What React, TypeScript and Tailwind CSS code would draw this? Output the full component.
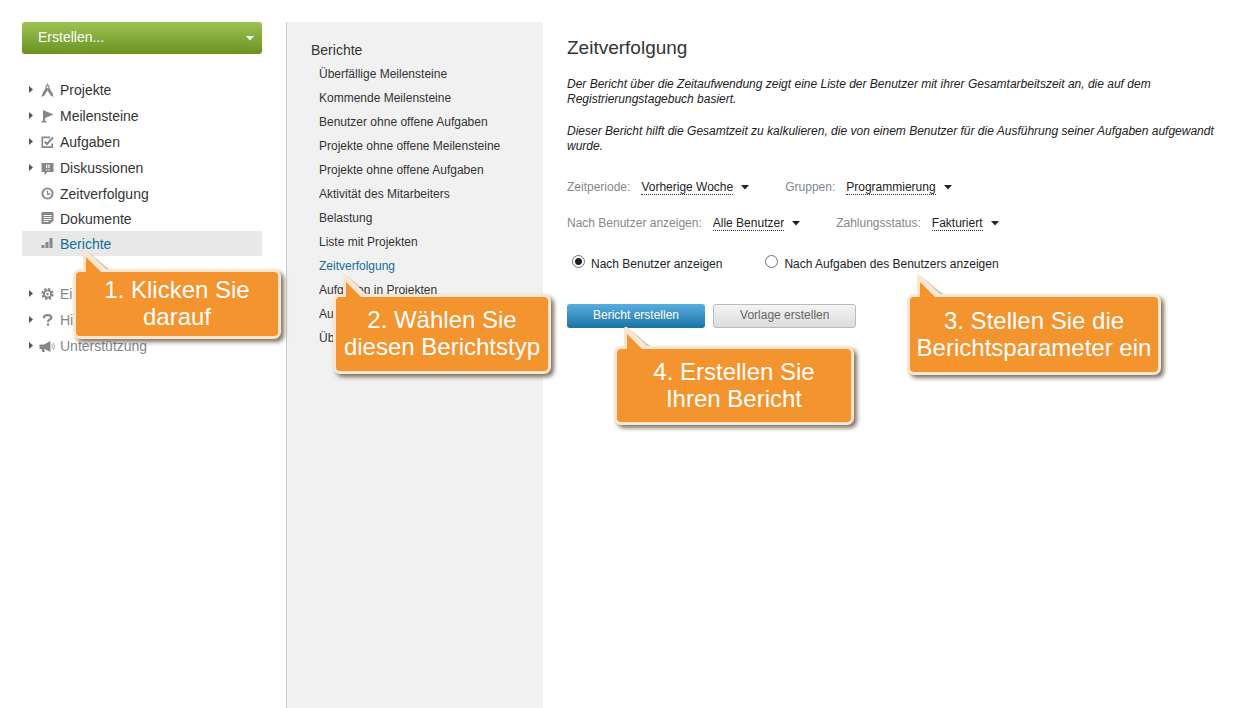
import React, { useState } from 'react';
import clsx from 'clsx';

interface NavItem {
  label: string;
  icon: React.ReactNode;
  expandable?: boolean;
}

const MAIN_ITEMS: NavItem[] = [
  {
    label: 'Projekte',
    expandable: true,
    icon: (
      <>
        <path d="M6 -0.5h1v2h-1z" />
        <circle cx="6.5" cy="3" r="1.6" fill="none" stroke="currentColor" strokeWidth="1.2" />
        <path d="M4.6 4 L1.4 9.6 L0.6 13 L3.4 11.6 L6.5 6.6 L9.6 11.6 L12.4 13 L11.6 9.6 L8.4 4 L6.5 5.4 Z" />
      </>
    ),
  },
  {
    label: 'Meilensteine',
    expandable: true,
    icon: <path d="M2 0 L12.5 4.6 L4.2 8 V11 H5.5 V12.5 H0.5 V11 H2 Z" />,
  },
  {
    label: 'Aufgaben',
    expandable: true,
    icon: (
      <>
        <path d="M9 1.3 H1.3 V11.2 H11.2 V7.5" fill="none" stroke="currentColor" strokeWidth="1.7" />
        <path d="M3.6 5.6 L6 8 L12 1.4" fill="none" stroke="currentColor" strokeWidth="2" />
      </>
    ),
  },
  {
    label: 'Diskussionen',
    expandable: true,
    icon: (
      <>
        <path d="M0.5 1 H12.5 V10 H6.5 L3.5 13 V10 H0.5 Z" />
        <path d="M5 2.5h1.2v3.5h-1.2z M7.3 2.5h1.2v3.5h-1.2z M5 7.2h1.2v1.3h-1.2z M7.3 7.2h1.2v1.3h-1.2z" fill="#fff" />
      </>
    ),
  },
  {
    label: 'Zeitverfolgung',
    icon: (
      <>
        <circle cx="6.5" cy="6.5" r="5.1" fill="none" stroke="currentColor" strokeWidth="1.9" />
        <path d="M6.5 3.4 V7 H9.4" fill="none" stroke="currentColor" strokeWidth="1.3" />
      </>
    ),
  },
  {
    label: 'Dokumente',
    icon: (
      <>
        <path d="M1.5 0 H11.5 Q12.5 0 12.5 1 V8.5 L9 12 H1.5 Q0.5 12 0.5 11 V1 Q0.5 0 1.5 0 Z" />
        <path d="M2.5 3h8v1h-8z M2.5 5h8v1h-8z M2.5 7h8v1h-8z M2.5 9h5v1h-5z" fill="#fff" />
      </>
    ),
  },
  {
    label: 'Berichte',
    icon: <path d="M0.5 8h3v3h-3z M4.5 5h3v6h-3z M8.5 1h3v10h-3z" />,
  },
];

const EXTRA_ITEMS: NavItem[] = [
  {
    label: 'Ei',
    expandable: true,
    icon: (
      <>
        <circle cx="6.5" cy="6" r="5.2" fill="none" stroke="currentColor" strokeWidth="1.8" strokeDasharray="2.4 1.68" />
        <circle cx="6.5" cy="6" r="3.6" fill="none" stroke="currentColor" strokeWidth="1.9" />
        <circle cx="6.5" cy="6" r="1.2" />
      </>
    ),
  },
  {
    label: 'Hi',
    expandable: true,
    icon: (
      <>
        <path d="M3 4.2 V3.2 Q3.2 1.2 6.6 1.2 Q10.4 1.2 10.4 3.6 Q10.4 5 8.4 5.8 Q7 6.4 7 8" fill="none" stroke="currentColor" strokeWidth="2.2" />
        <path d="M5.9 9.3h2.3v2.2h-2.3z" />
      </>
    ),
  },
  {
    label: 'Unterstützung',
    expandable: true,
    icon: (
      <>
        <path d="M-1.5 4.5 H3 L9.4 1 V12 L3.4 9 H3 L4 12 H1.4 L0.4 9 H-1.5 Z" />
        <path d="M10.8 4.2 Q12 6.5 10.8 8.8 M12.4 2.8 Q14.4 6.5 12.4 10.2" fill="none" stroke="currentColor" strokeWidth="0.7" />
      </>
    ),
  },
];

const REPORTS = [
  'Überfällige Meilensteine',
  'Kommende Meilensteine',
  'Benutzer ohne offene Aufgaben',
  'Projekte ohne offene Meilensteine',
  'Projekte ohne offene Aufgaben',
  'Aktivität des Mitarbeiters',
  'Belastung',
  'Liste mit Projekten',
  'Zeitverfolgung',
  'Aufgaben in Projekten',
  'Au',
  'Üb',
];

const FILTER_ROWS = [
  [
    { id: 'period', label: 'Zeitperiode:', value: 'Vorherige Woche' },
    { id: 'group', label: 'Gruppen:', value: 'Programmierung' },
  ],
  [
    { id: 'user', label: 'Nach Benutzer anzeigen:', value: 'Alle Benutzer' },
    { id: 'payment', label: 'Zahlungsstatus:', value: 'Fakturiert' },
  ],
];

const NavList = ({ items, active, muted }: { items: NavItem[]; active?: string; muted?: boolean }) => (
  <ul>
    {items.map((item) => (
      <li key={item.label}>
        <a
          href="#"
          className={clsx(
            'flex items-center pl-[7px] text-sm',
            item.expandable ? 'h-[26px]' : 'h-[25px]',
            item.label === active && 'bg-[#e8e8e8] text-[#116d9d]',
            item.label !== active && (muted ? 'text-[#83888d]' : 'text-[#333]')
          )}
        >
          <svg width="5" height="8" viewBox="0 0 5 8" className="mr-[7px] shrink-0 text-[#555]" fill="currentColor">
            {item.expandable && <path d="M0 0 L4 3.5 L0 7 Z" />}
          </svg>
          <svg
            width="13"
            height="13"
            viewBox="0 0 13 13"
            className="mr-[6px] shrink-0 overflow-visible text-[#83888d]"
            fill="currentColor"
          >
            {item.icon}
          </svg>
          {item.label}
        </a>
      </li>
    ))}
  </ul>
);

const Callout = ({ className, children }: { className: string; children: React.ReactNode }) => (
  <div className={clsx('absolute z-10', className)}>
    <div className="flex h-full items-center justify-center rounded-[7px] border-[3px] border-[#fde6cf] bg-[#f4942e] pb-[2px] text-center text-2xl leading-[27px] text-white shadow-[3px_3px_4px_rgba(60,40,20,0.65)]">
      <p className="whitespace-nowrap">{children}</p>
    </div>
    <svg
      width="34"
      height="23"
      viewBox="0 0 34 23"
      className="absolute -top-[20px] left-[9px]"
    >
      <path d="M4 1 L27 20 H22 Z" fill="#3c2814" opacity="0.25" />
      <path d="M1 23 V2 Q2 0 4 1 L24 20 V23 Z" fill="#fde6cf" />
      <path d="M4 23 V8 L19 23 Z" fill="#f4942e" />
    </svg>
  </div>
);

const App: React.FC = () => {
  const [mode, setMode] = useState('users');

  return (
    <div className="relative flex min-h-screen bg-white pt-[22px] pl-[22px] font-['Liberation_Sans',Arial,sans-serif] text-xs text-[#333]">
      {/* Navigation */}
      <aside className="w-60 shrink-0">
        <button className="flex h-8 w-full items-center justify-between rounded-[3px] bg-linear-to-b from-[#9dc355] to-[#6a931e] pr-2 pb-[2px] pl-4 text-sm text-white">
          Erstellen...
          <svg width="8" height="5" viewBox="0 0 8 5" fill="currentColor" className="mt-[3px]">
            <path d="M0 0 H8 L4 4.5 Z" />
          </svg>
        </button>
        <nav className="mt-[23px] space-y-[25px]">
          <NavList items={MAIN_ITEMS} active="Berichte" />
          <NavList items={EXTRA_ITEMS} muted />
        </nav>
      </aside>

      {/* Report types */}
      <section className="ml-6 w-[257px] shrink-0 border-l border-[#ccc] bg-[#f1f1f1] pt-4 pl-6">
        <h2 className="text-sm leading-6">Berichte</h2>
        <ul className="pl-2">
          {REPORTS.map((report) => (
            <li key={report} className="leading-6">
              <a href="#" className={clsx(report === 'Zeitverfolgung' && 'text-[#116d9d]')}>
                {report}
              </a>
            </li>
          ))}
        </ul>
      </section>

      {/* Report parameters */}
      <main className="min-w-0 flex-1 pt-3 pl-6">
        <h1 className="text-[19px] leading-7">Zeitverfolgung</h1>
        <div className="mt-[15px] space-y-[17px] leading-[15px] text-[#222] italic">
          <p>
            Der Bericht über die Zeitaufwendung zeigt eine Liste der Benutzer mit ihrer Gesamtarbeitszeit an, die auf
            dem Registrierungstagebuch basiert.
          </p>
          <p>
            Dieser Bericht hilft die Gesamtzeit zu kalkulieren, die von einem Benutzer für die Ausführung seiner
            Aufgaben aufgewandt wurde.
          </p>
        </div>

        <div className="mt-[23px] space-y-4">
          {FILTER_ROWS.map((row) => (
            <div key={row[0].id} className="flex h-5 gap-9">
              {row.map((filter) => (
                <div key={filter.id} className="flex items-center">
                  <label htmlFor={filter.id} className="mr-[11px] text-[#83888d]">
                    {filter.label}
                  </label>
                  <select
                    id={filter.id}
                    className="field-sizing-content h-4 appearance-none border-b border-dotted border-[#333] leading-[14px] text-[#222]"
                  >
                    <option>{filter.value}</option>
                  </select>
                  <svg width="8" height="5" viewBox="0 0 8 5" className="ml-2" fill="#222">
                    <path d="M0 0 H8 L4 4.5 Z" />
                  </svg>
                </div>
              ))}
            </div>
          ))}
        </div>

        <div className="mt-[21px] flex gap-[43px] pl-[5px]">
          {[
            { id: 'users', label: 'Nach Benutzer anzeigen' },
            { id: 'tasks', label: 'Nach Aufgaben des Benutzers anzeigen' },
          ].map((option) => (
            <label key={option.id} className="flex h-5 items-center gap-[6px] text-[#222]">
              <input
                type="radio"
                name="mode"
                checked={mode === option.id}
                onChange={() => setMode(option.id)}
                className="mb-[5px] size-[13px] appearance-none rounded-full border border-[#707070] bg-white checked:bg-[radial-gradient(circle,#222_0,#222_3px,transparent_4px)]"
              />
              {option.label}
            </label>
          ))}
        </div>

        <div className="mt-[30px] flex gap-2">
          <button className="h-6 rounded-[3px] bg-linear-to-b from-[#57afdf] to-[#1a73a5] px-[26px] pb-[2px] text-white">
            Bericht erstellen
          </button>
          <button className="h-6 rounded-[3px] border border-[#bbb] bg-linear-to-b from-[#f4f4f4] to-[#dcdcdc] px-[26px] pb-[2px] text-[#666]">
            Vorlage erstellen
          </button>
        </div>
      </main>

      <Callout className="top-[269px] left-[73px] h-[70px] w-[208px]">
        1. Klicken Sie
        <br />
        darauf
      </Callout>
      <Callout className="top-[294px] left-[333px] h-[80px] w-[218px]">
        2. Wählen Sie
        <br />
        diesen Berichtstyp
      </Callout>
      <Callout className="top-[294px] left-[907px] h-[81px] w-[254px]">
        3. Stellen Sie die
        <br />
        Berichtsparameter ein
      </Callout>
      <Callout className="top-[346px] left-[614px] h-[79px] w-[240px]">
        4. Erstellen Sie
        <br />
        Ihren Bericht
      </Callout>
    </div>
  );
};

export default App;
